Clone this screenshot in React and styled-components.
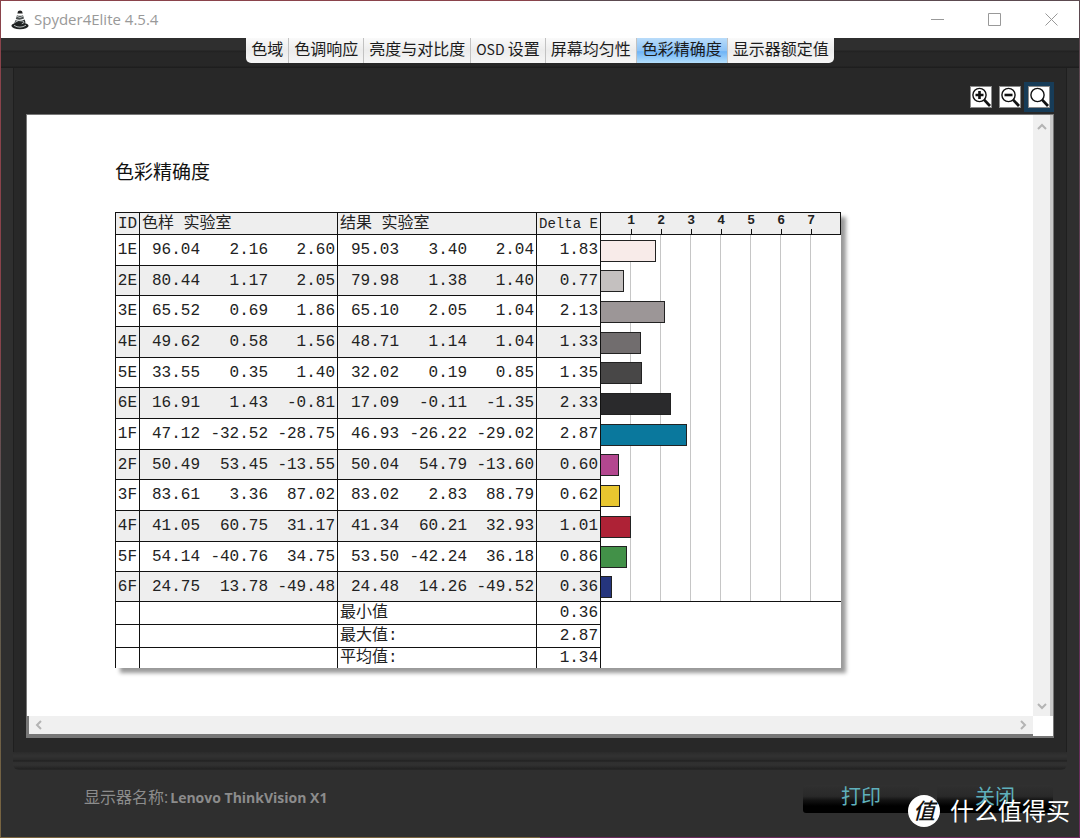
import React, { useState } from 'react'
import styled, { createGlobalStyle, css } from 'styled-components'

const UNIT = 30 // width of one Delta E step on the chart

const tabs = [
  { label: '色域' },
  { label: '色调响应' },
  { label: '亮度与对比度' },
  { latin: 'OSD ', label: '设置' },
  { label: '屏幕均匀性' },
  { label: '色彩精确度' },
  { label: '显示器额定值' },
]

const rows = [
  { id: '1E', sample: ['96.04', '2.16', '2.60'], result: ['95.03', '3.40', '2.04'], delta: '1.83', color: '#f8ebe9' },
  { id: '2E', sample: ['80.44', '1.17', '2.05'], result: ['79.98', '1.38', '1.40'], delta: '0.77', color: '#c4c0bf' },
  { id: '3E', sample: ['65.52', '0.69', '1.86'], result: ['65.10', '2.05', '1.04'], delta: '2.13', color: '#9c9697' },
  { id: '4E', sample: ['49.62', '0.58', '1.56'], result: ['48.71', '1.14', '1.04'], delta: '1.33', color: '#716d6e' },
  { id: '5E', sample: ['33.55', '0.35', '1.40'], result: ['32.02', '0.19', '0.85'], delta: '1.35', color: '#484747' },
  { id: '6E', sample: ['16.91', '1.43', '-0.81'], result: ['17.09', '-0.11', '-1.35'], delta: '2.33', color: '#2a2a2c' },
  { id: '1F', sample: ['47.12', '-32.52', '-28.75'], result: ['46.93', '-26.22', '-29.02'], delta: '2.87', color: '#0a789d' },
  { id: '2F', sample: ['50.49', '53.45', '-13.55'], result: ['50.04', '54.79', '-13.60'], delta: '0.60', color: '#b3478f' },
  { id: '3F', sample: ['83.61', '3.36', '87.02'], result: ['83.02', '2.83', '88.79'], delta: '0.62', color: '#e8c62f' },
  { id: '4F', sample: ['41.05', '60.75', '31.17'], result: ['41.34', '60.21', '32.93'], delta: '1.01', color: '#ae2236' },
  { id: '5F', sample: ['54.14', '-40.76', '34.75'], result: ['53.50', '-42.24', '36.18'], delta: '0.86', color: '#429148' },
  { id: '6F', sample: ['24.75', '13.78', '-49.48'], result: ['24.48', '14.26', '-49.52'], delta: '0.36', color: '#25357d' },
]

const summary = [
  { label: '最小值', value: '0.36' },
  { label: '最大值:', value: '2.87' },
  { label: '平均值:', value: '1.34' },
]

const zoomModes = [
  { name: '放大', sign: 'M4 8h8M8 4v8' },
  { name: '缩小', sign: 'M4 8h8' },
  { name: '适合窗口' },
]

export default function App() {
  const [tab, setTab] = useState(5)
  const [zoom, setZoom] = useState(2)

  return (
    <>
      <GlobalStyle />
      <Frame>
        <TitleBar>
          <AppIcon />
          <AppName>Spyder4Elite 4.5.4</AppName>
          <WindowButton aria-label="最小化"><svg viewBox="0 0 13 13"><path d="M0 6.5h13" /></svg></WindowButton>
          <WindowButton aria-label="最大化"><svg viewBox="0 0 13 13"><path d="M.5.5h12v12H.5z" /></svg></WindowButton>
          <WindowButton aria-label="关闭窗口"><svg viewBox="0 0 13 13"><path d="M.5.5l12 12M12.5.5l-12 12" /></svg></WindowButton>
        </TitleBar>

        <Body>
          <TabStrip>
            <Tabs role="tablist">
              {tabs.map((t, i) => (
                <Tab key={t.label} role="tab" aria-selected={i === tab} $active={i === tab} onClick={() => setTab(i)}>
                  {t.latin && <Latin>{t.latin}</Latin>}{t.label}
                </Tab>
              ))}
            </Tabs>
          </TabStrip>

          <Panel>
            <Toolbar>
              {zoomModes.map((mode, i) => (
                <ZoomButton key={mode.name} aria-label={mode.name} $active={i === zoom} onClick={() => setZoom(i)}>
                  <svg viewBox="0 0 20 20">
                    <circle cx="8.5" cy="8" r="6.6" strokeWidth="1.4" />
                    {mode.sign && <path d={mode.sign} strokeWidth="2.6" transform="translate(.5 0)" />}
                    <path d="M13 12.6l6 6.4" strokeWidth="2.8" />
                  </svg>
                </ZoomButton>
              ))}
            </Toolbar>

            <Viewer>
              <Page>
                <Title>色彩精确度</Title>
                <Report />
              </Page>
              <VerticalBar>
                <ArrowButton aria-label="向上"><svg viewBox="0 0 10 10"><path d="M1 7l4-4 4 4" /></svg></ArrowButton>
                <ArrowButton aria-label="向下"><svg viewBox="0 0 10 10"><path d="M1 3l4 4 4-4" /></svg></ArrowButton>
              </VerticalBar>
              <HorizontalBar>
                <ArrowButton aria-label="向左"><svg viewBox="0 0 10 10"><path d="M7 1L3 5l4 4" /></svg></ArrowButton>
                <ArrowButton aria-label="向右"><svg viewBox="0 0 10 10"><path d="M3 1l4 4-4 4" /></svg></ArrowButton>
              </HorizontalBar>
            </Viewer>
          </Panel>

          <Ridge />

          <Footer>
            <Monitor>显示器名称:<b>Lenovo ThinkVision X1</b></Monitor>
            <Action>打印</Action>
            <Action>关闭</Action>
          </Footer>
        </Body>

        <Watermark>
          <Badge>值</Badge>
          什么值得买
        </Watermark>
      </Frame>
    </>
  )
}

function Report() {
  return (
    <Table>
      <colgroup>
        <Col $width={24} />
        <Col $width={62} /><Col $width={68} /><Col $width={68} />
        <Col $width={63} /><Col $width={68} /><Col $width={68} />
        <Col $width={64} />
        <Col $width={UNIT * 8} />
      </colgroup>
      <thead>
        <tr>
          <HeadCell>ID</HeadCell>
          <HeadCell colSpan={3}>色样 实验室</HeadCell>
          <HeadCell colSpan={3}>结果 实验室</HeadCell>
          <DeltaHead>Delta E</DeltaHead>
          <ScaleCell>
            <Scale>
              {[1, 2, 3, 4, 5, 6, 7].map(n => <Mark key={n}>{n}</Mark>)}
            </Scale>
          </ScaleCell>
        </tr>
      </thead>
      <tbody>
        {rows.map(row => (
          <Row key={row.id}>
            <Cell $line>{row.id}</Cell>
            {row.sample.map((v, i) => <Cell key={i} $line={i === 2}>{v}</Cell>)}
            {row.result.map((v, i) => <Cell key={i} $line={i === 2}>{v}</Cell>)}
            <Cell $line>{row.delta}</Cell>
            <ChartCell>
              <Bar style={{ width: Math.round(row.delta * UNIT), background: row.color }} />
            </ChartCell>
          </Row>
        ))}
      </tbody>
      <tfoot>
        {summary.map((s, i) => (
          <SummaryRow key={s.label}>
            <Cell $line />
            <Cell $line colSpan={3} />
            <LabelCell colSpan={3}>{s.label}</LabelCell>
            <Cell $line>{s.value}</Cell>
            {i === 0 && <td rowSpan={3} />}
          </SummaryRow>
        ))}
      </tfoot>
    </Table>
  )
}

function AppIcon() {
  return (
    <Logo viewBox="0 0 18 20" aria-hidden="true">
      <path d="M7 1.2Q9 0 11 1.2l.7 2.2H6.4z" fill="#222" />
      <path d="M6 5.2q3 1.2 6 0l1 3.4q-4 2-8.2.4z" fill="#4a4f50" />
      <path d="M4.4 10.2q5 1.8 9.2-.6l1 3q-5 3.4-11.4 1z" fill="#262a2b" />
      <ellipse cx="9" cy="15.8" rx="8.6" ry="3.4" fill="#1f2222" />
      <path d="M5.4 6.2q4 2.6 6.4.2M3.8 12.4q3.4-3.2 8.6-1.2 2 1.4-1.6 2.6M3 15.4q6 3.6 12-.2" fill="none" stroke="#c4caca" strokeWidth=".9" />
    </Logo>
  )
}

const GlobalStyle = createGlobalStyle`
  * {
    box-sizing: border-box;
  }

  body {
    margin: 0;
    font-family: "Open Sans", "Noto Sans CJK SC", sans-serif;
    font-size: 16px;
  }

  button {
    font: inherit;
    border: 0;
    padding: 0;
    cursor: pointer;
  }
`

const Frame = styled.div`
  position: relative;
  display: flex;
  flex-direction: column;
  min-height: 100vh;
  padding: 1px;
  background:
    linear-gradient(#8a434b, #8a434b 40%, #555 60%, #7a6540) left / 50% 100% no-repeat,
    linear-gradient(#5c4a50, #6a2a5c) right / 50% 100% no-repeat;
`

const TitleBar = styled.header`
  display: flex;
  align-items: center;
  height: 37px;
  padding: 0 21px 0 10px;
  background: #fff;
`

const Logo = styled.svg`
  width: 18px;
  height: 20px;
`

const AppName = styled.span`
  flex: 1;
  margin-left: 5px;
  padding-bottom: 2px;
  font-size: 15px;
  color: #999;
`

const WindowButton = styled.button`
  width: 13px;
  height: 13px;
  margin-left: 44px;
  background: none;

  svg {
    display: block;
    fill: none;
    stroke: #999;
  }
`

const Body = styled.main`
  flex: 1;
  display: flex;
  flex-direction: column;
  background: #2f2f2f;
`

const TabStrip = styled.div`
  display: flex;
  justify-content: center;
  align-items: flex-start;
  height: 30px;
  background: linear-gradient(#2f2f2f 12px, #212121 13px, #272727 15px, #272727 28px, #1e1e1e 29px);
`

const Tabs = styled.div`
  display: flex;
  height: 25px;
  border-radius: 0 0 5px 5px;
  overflow: hidden;
`

const Tab = styled.button`
  display: flex;
  align-items: center;
  padding: 0 5px 3px;
  line-height: 20px;
  color: #1c1c1c;
  background: linear-gradient(#fafafa, #ececec 50%, #f6f6f6);
  white-space: pre;

  & + & {
    border-left: 1px solid #c2c2c2;
  }

  ${({ $active }) => $active && css`
    background: linear-gradient(#b9dcfa, #8dc3f6 50%, #6fb4f6 55%, #b4dffc);
  `}
`

const Latin = styled.span`
  font-family: "Noto Sans CJK SC", sans-serif;
  font-size: 14px;
`

const Panel = styled.section`
  flex: 1;
  display: flex;
  flex-direction: column;
  margin: 0 12px;
  padding: 0 12px 14px;
  background: #282828;
  border: 1px solid #1f1f1f;
  border-width: 0 1px;
`

const Toolbar = styled.div`
  display: flex;
  justify-content: flex-end;
  gap: 7px;
  padding: 18px 4px 6px;
`

const ZoomButton = styled.button`
  width: 22px;
  height: 22px;
  background: #fff;
  border: 1px solid #8a8a8a;

  ${({ $active }) => $active && css`
    box-shadow: 0 0 0 4px #173c58;
  `}

  svg {
    display: block;
    fill: none;
    stroke: #111;
  }
`

const Viewer = styled.div`
  flex: 1;
  display: grid;
  grid-template-columns: 1fr 20px;
  grid-template-rows: 1fr 20px;
  background: #fff;
  border: 1px solid #777;
  border-width: 1px 1px 2px 1px;
`

const Page = styled.article`
  padding: 44px 0 48px 88px;
  overflow: hidden;
`

const Title = styled.h1`
  margin: 0 0 27px;
  font-size: 19px;
  font-weight: 400;
  line-height: 26px;
  color: #111;
`

const VerticalBar = styled.div`
  display: flex;
  flex-direction: column;
  justify-content: space-between;
  align-items: center;
  padding: 7px 0 5px;
  background: #f0f0f0;
  border-right: 3px solid #c8c8c8;
`

const HorizontalBar = styled.div`
  display: flex;
  justify-content: space-between;
  align-items: center;
  padding: 0 5px;
  background: #f0f0f0;
  border-left: 2px solid #777;
  border-bottom: 2px solid #777;
`

const ArrowButton = styled.button`
  width: 10px;
  height: 10px;
  background: none;

  svg {
    display: block;
    fill: none;
    stroke: #b4b4b4;
    stroke-width: 2;
  }
`

const Table = styled.table`
  table-layout: fixed;
  width: 726px;
  border-spacing: 0;
  border-left: 1px solid #111;
  box-shadow: 5px 5px 4px #9a9a9a;
  background: #fff;
  color: #222;
  font-family: "Liberation Mono", "Noto Sans CJK SC", monospace;
  font-size: 16px;
  line-height: 20px;
  white-space: nowrap;
`

const Col = styled.col`
  width: ${({ $width }) => $width}px;
`

const HeadCell = styled.th`
  height: 23px;
  padding: 0 2px;
  background: #eee;
  border: 1px solid #111;
  border-width: 1px 1px 1px 0;
  font-weight: 400;
  text-align: left;
`

const DeltaHead = styled(HeadCell)`
  font-size: 14px;
`

const ScaleCell = styled(HeadCell)`
  padding: 0;
`

const Scale = styled.div`
  display: flex;
  padding-left: 15px;
`

const Mark = styled.span`
  display: flex;
  flex-direction: column;
  align-items: center;
  justify-content: space-between;
  width: ${UNIT}px;
  height: 21px;
  font-size: 13px;
  font-weight: 700;
  line-height: 15px;

  &::after {
    content: '';
    width: 1px;
    height: 5px;
    background: #111;
  }
`

const Cell = styled.td`
  padding: 0 2px 0 0;
  border-bottom: 1px solid #111;
  border-right: ${({ $line }) => ($line ? '1px solid #111' : '0')};
  text-align: right;
`

const LabelCell = styled(Cell)`
  padding: 0 2px;
  border-right: 1px solid #111;
  text-align: left;
`

const ChartCell = styled.td`
  padding: 0;
  background: repeating-linear-gradient(to right, #fff 0 29px, #c6c6c6 29px 30px) left / ${UNIT * 7}px 100% no-repeat #fff;
`

const Bar = styled.div`
  height: 22px;
  border: 1px solid #222;
  border-left: 0;
`

const Row = styled.tr`
  height: 31px;

  &:nth-child(3n + 2) {
    height: 30px;
  }

  &:nth-child(even) ${Cell} {
    background: #eee;
  }

  &:last-child {
    height: 30px;
  }

  &:last-child ${ChartCell} {
    border-bottom: 1px solid #111;
  }
`

const SummaryRow = styled.tr`
  height: 23px;

  &:last-child {
    height: 20px;
  }

  &:last-child ${Cell}, &:last-child ${LabelCell} {
    border-bottom: 0;
  }
`

const Ridge = styled.div`
  height: 18px;
  margin: 0 12px;
  border-radius: 0 0 6px 6px;
  background: linear-gradient(#2b2b2b, #323232 4px, #2a2a2a 8px, #1f1f1f 9px, #2f2f2f 10px, #313131 13px, #222 17px, #2a2a2a);
`

const Footer = styled.footer`
  display: flex;
  align-items: flex-start;
  gap: 18px;
  height: 67px;
  padding: 15px 26px 0 83px;
`

const Monitor = styled.p`
  flex: 1;
  margin: 0;
  line-height: 24px;
  color: #8c8c8c;

  b {
    margin-left: 2px;
    font-size: 14px;
    font-weight: 700;
  }
`

const Action = styled.button`
  width: 116px;
  height: 28px;
  padding-bottom: 4px;
  font-size: 20px;
  line-height: 24px;
  color: #5fb0bc;
  background: linear-gradient(#303030, #292929 40%, #121212 55%, #000 75%);
  border-radius: 3px;
`

/* sits over the footer buttons */
const Watermark = styled.div`
  position: absolute;
  right: 10px;
  bottom: 11px;
  display: flex;
  align-items: center;
  gap: 10px;
  font-size: 24px;
  line-height: 32px;
  color: #fff;
  pointer-events: none;
`

const Badge = styled.span`
  width: 32px;
  height: 32px;
  border-radius: 50%;
  background: #fff;
  color: #111;
  font-size: 22px;
  font-style: italic;
  font-weight: 500;
  line-height: 31px;
  text-align: center;
`
